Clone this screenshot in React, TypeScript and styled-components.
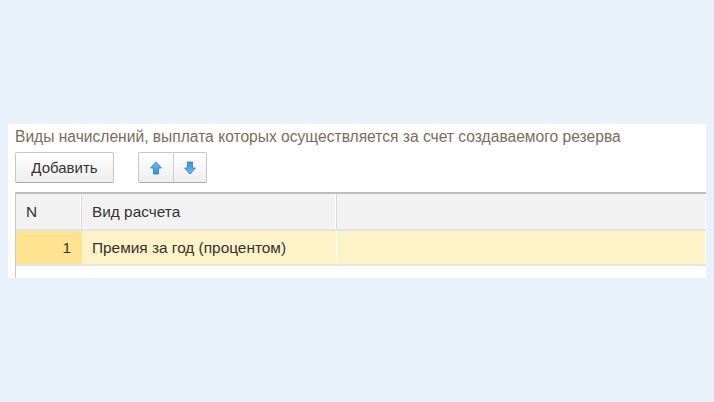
import styled, { createGlobalStyle } from "styled-components";

const GlobalStyle = createGlobalStyle`
  html, body {
    margin: 0;
    padding: 0;
    background-color: #e9f2fb;
  }
  body {
    font-family: "Liberation Sans", Arial, sans-serif;
  }
`;

const Page = styled.div`
  width: 714px;
  height: 402px;
  padding: 124px 8px 0 8px;
  box-sizing: border-box;
`;

const Panel = styled.div`
  background-color: #ffffff;
  height: 154px;
  padding: 3px 0 0 7px;
  box-sizing: border-box;
  display: flex;
  flex-direction: column;
`;

const Caption = styled.div`
  color: #7c6d58;
  font-size: 15.6px;
  line-height: 19px;
  white-space: nowrap;
`;

const Toolbar = styled.div`
  display: flex;
  align-items: center;
  gap: 24px;
  margin-top: 6px;
`;

const Button = styled.button`
  height: 31px;
  padding: 0 14px;
  box-sizing: border-box;
  border: 1px solid #c6c6c6;
  border-bottom-color: #a9a9a9;
  border-radius: 2px;
  background: linear-gradient(#ffffff, #eeeeee);
  color: #333333;
  font-family: inherit;
  font-size: 15px;
  display: flex;
  align-items: center;
  justify-content: center;
  cursor: pointer;
`;

const AddButton = styled(Button)`
  width: 99px;
`;

const Group = styled.div`
  display: flex;
`;

const IconButton = styled(Button)<{ $side: "left" | "right" }>`
  width: ${(p) => (p.$side === "left" ? 35 : 34)}px;
  padding: 0;
  border-radius: ${(p) => (p.$side === "left" ? "2px 0 0 2px" : "0 2px 2px 0")};
  ${(p) => (p.$side === "right" ? "border-left: 1px solid #d0d0d0;" : "border-right: none;")}
`;

const Table = styled.div`
  margin-top: 9px;
  flex: 1;
  border-left: 1px solid #c9c9c9;
  border-top: 2px solid #bdbdbd;
  display: flex;
  flex-direction: column;
`;

const Row = styled.div<{ $head?: boolean }>`
  display: grid;
  grid-template-columns: 66px 255px 1fr;
  height: ${(p) => (p.$head ? 35 : 33)}px;
  border-bottom: 2px solid #e4e4e4;
`;

const Cell = styled.div<{ $bg: string; $right?: boolean }>`
  background-color: ${(p) => p.$bg};
  border-right: 1px solid ${(p) => (p.$right ? "transparent" : "#ffffff")};
  color: #333333;
  font-size: 15.4px;
  display: flex;
  align-items: center;
  padding: 0 10px;
  box-sizing: border-box;
  justify-content: ${(p) => (p.$right ? "flex-end" : "flex-start")};
`;

const HeadCell = styled(Cell)`
  border-right: 1px solid #dadada;
  box-shadow: inset -1px 0 0 #ffffff;
`;

function Arrow({ down }: { down?: boolean }) {
  const id = down ? "gd" : "gu";
  return (
    <svg
      width="12"
      height="14"
      viewBox="0 0 12 14"
      style={{ transform: down ? "rotate(180deg)" : undefined }}
    >
      <defs>
        <linearGradient id={id} x1="0" y1="0" x2="0" y2="1">
          <stop offset="0" stopColor="#6cc0f5" />
          <stop offset="1" stopColor="#2e8fd8" />
        </linearGradient>
      </defs>
      <path
        d="M6 1 L11.4 7 H8.6 V13 H3.4 V7 H0.6 Z"
        fill={`url(#${id})`}
        stroke="#2b7fc4"
        strokeWidth="0.8"
        strokeLinejoin="round"
      />
    </svg>
  );
}

export default function App() {
  return (
    <>
      <GlobalStyle />
      <Page>
        <Panel>
          <Caption>
            Виды начислений, выплата которых осуществляется за счет создаваемого резерва
          </Caption>
          <Toolbar>
            <AddButton>Добавить</AddButton>
            <Group>
              <IconButton $side="left">
                <Arrow />
              </IconButton>
              <IconButton $side="right">
                <Arrow down />
              </IconButton>
            </Group>
          </Toolbar>
          <Table>
            <Row $head>
              <HeadCell $bg="#f2f2f2">N</HeadCell>
              <HeadCell $bg="#f2f2f2">Вид расчета</HeadCell>
              <Cell $bg="#f2f2f2" />
            </Row>
            <Row>
              <Cell $bg="#fde38f" $right>
                1
              </Cell>
              <Cell $bg="#fef2c7">Премия за год (процентом)</Cell>
              <Cell $bg="#fef2c7" />
            </Row>
          </Table>
        </Panel>
      </Page>
    </>
  );
}
